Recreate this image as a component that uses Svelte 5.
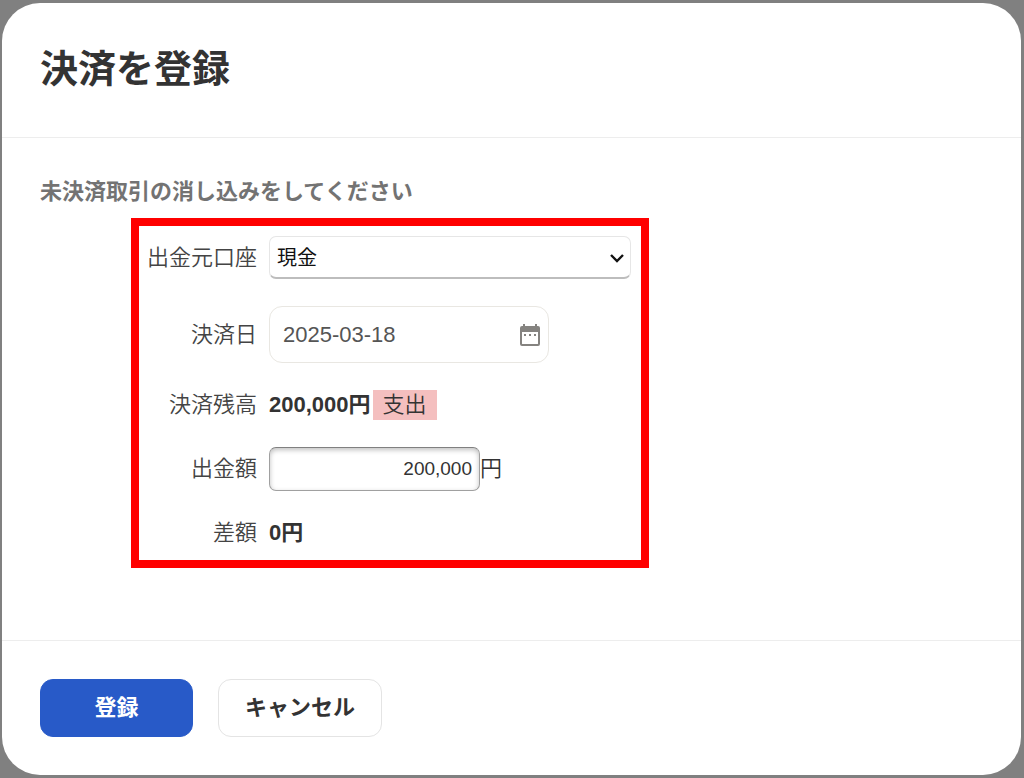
<script lang="ts">
  const accounts = ['現金', '普通預金', '事業主貸']

  let account = $state('現金')
  let date = $state('2025-03-18')
  let amount = $state('200,000')

  const balance = 200000
  const diff = $derived(balance - (Number(amount.replace(/,/g, '')) || 0))

  const yen = (n: number) => n.toLocaleString('en-US') + '円'
</script>

<div class="backdrop">
  <div class="dialog" role="dialog" aria-modal="true" aria-labelledby="title">
    <header>
      <h1 id="title">決済を登録</h1>
    </header>

    <div class="body">
      <p class="lead">未決済取引の消し込みをしてください</p>

      <form class="fields" id="settlement" onsubmit={(e) => e.preventDefault()}>
        <label for="account">出金元口座</label>
        <div class="select">
          <select id="account" bind:value={account}>
            {#each accounts as name}
              <option>{name}</option>
            {/each}
          </select>
          <svg viewBox="0 0 16 10" aria-hidden="true">
            <path d="M2 2l6 6 6-6" fill="none" stroke="#111" stroke-width="2.4" />
          </svg>
        </div>

        <label for="date">決済日</label>
        <div class="date">
          <input id="date" type="text" bind:value={date} />
          <button type="button" class="calendar" aria-label="カレンダー">
            <svg viewBox="0 0 20 22" aria-hidden="true">
              <path
                fill="#858380"
                fill-rule="evenodd"
                d="M3 0h2v2h10V0h2v2h1a2 2 0 0 1 2 2v16a2 2 0 0 1-2 2H2a2 2 0 0 1-2-2V4a2 2 0 0 1 2-2h1zM2 8v11.5a.5.5 0 0 0 .5.5h15a.5.5 0 0 0 .5-.5V8z"
              />
              <path fill="#858380" d="M4 10h2v2H4zM9 10h2v2H9zM14 10h2v2h-2z" />
            </svg>
          </button>
        </div>

        <span class="label">決済残高</span>
        <div class="value"><strong>{yen(balance)}</strong><span class="tag">支出</span></div>

        <label for="amount">出金額</label>
        <div class="value">
          <input id="amount" class="amount" type="text" inputmode="numeric" bind:value={amount} />
          <span>円</span>
        </div>

        <span class="label">差額</span>
        <div class="value"><strong>{yen(diff)}</strong></div>
      </form>
    </div>

    <footer>
      <button type="submit" form="settlement" class="btn primary">登録</button>
      <button type="button" class="btn">キャンセル</button>
    </footer>
  </div>
</div>

<style>
  :global(body) {
    margin: 0;
    background: #808080;
  }

  .backdrop {
    box-sizing: border-box;
    min-height: 100vh;
    padding: 3px 3px 3px 2px;
    background: #808080;
    color: #333;
    font-family: 'Liberation Sans', 'Noto Sans CJK JP', sans-serif;
    font-size: 22px;
    line-height: 30px;
  }

  .dialog {
    background: #fff;
    border-radius: 38px;
  }

  header {
    padding: 37px 38px 39px;
    border-bottom: 1px solid #ededed;
  }
  h1 {
    margin: 0;
    font-size: 38px;
    line-height: 58px;
    font-weight: 700;
  }

  .body {
    padding: 38px 38px 72px;
  }
  .lead {
    margin: 0 0 10px;
    line-height: 32px;
    font-weight: 700;
    color: #737373;
  }

  .fields {
    display: grid;
    grid-template-columns: 118px auto;
    column-gap: 12px;
    row-gap: 27px;
    align-items: center;
    width: fit-content;
    margin-left: 91px;
    padding: 10px 10px 12px 0;
    border: 8px solid #f00;
  }
  label,
  .label {
    text-align: right;
    font-weight: 350;
    color: #444;
  }

  input,
  select,
  button {
    box-sizing: border-box;
    margin: 0;
    font-family: inherit;
    color: inherit;
  }

  .select {
    position: relative;
    width: 362px;
  }
  select {
    display: block;
    width: 100%;
    height: 43px;
    padding: 2px 32px 0 7px;
    appearance: none;
    background: #fff;
    border: 1px solid #e6e6e6;
    border-bottom: 2px solid #bdbdbd;
    border-radius: 7px;
    font-size: 20px;
    color: #111;
  }
  .select svg {
    position: absolute;
    top: 17px;
    right: 6px;
    width: 16px;
    height: 10px;
    pointer-events: none;
  }

  .date {
    display: flex;
    align-items: center;
    box-sizing: border-box;
    width: 280px;
    height: 57px;
    padding: 0 8px 0 13px;
    border: 1px solid #e9e7e2;
    border-radius: 13px;
  }
  .date input {
    flex: 1;
    min-width: 0;
    padding: 0;
    border: none;
    outline: none;
    background: none;
    font-size: 22px;
    color: #555;
  }
  .calendar {
    display: flex;
    padding: 0;
    border: none;
    background: none;
    cursor: pointer;
  }
  .calendar svg {
    width: 20px;
    height: 22px;
  }

  .value {
    display: flex;
    align-items: center;
    font-weight: 350;
  }
  strong {
    font-weight: 700;
  }
  .tag {
    margin-left: 2px;
    padding: 0 10px;
    background: #f4bfbf;
  }
  .amount {
    width: 211px;
    height: 44px;
    padding: 0 7px;
    border: 1px solid #a0a0a0;
    border-top-color: #808080;
    border-radius: 7px;
    box-shadow: inset 0 2px 5px rgba(0, 0, 0, 0.25);
    font-size: 19px;
    text-align: right;
  }

  footer {
    display: flex;
    gap: 25px;
    padding: 38px;
    border-top: 1px solid #ededed;
  }
  .btn {
    height: 58px;
    padding: 0 26px 6px;
    background: #fff;
    border: 1px solid #e4e4e4;
    border-radius: 13px;
    font-size: 22px;
    font-weight: 700;
    cursor: pointer;
  }
  .btn.primary {
    min-width: 153px;
    background: #285ac8;
    border-color: #285ac8;
    color: #fff;
  }
</style>
